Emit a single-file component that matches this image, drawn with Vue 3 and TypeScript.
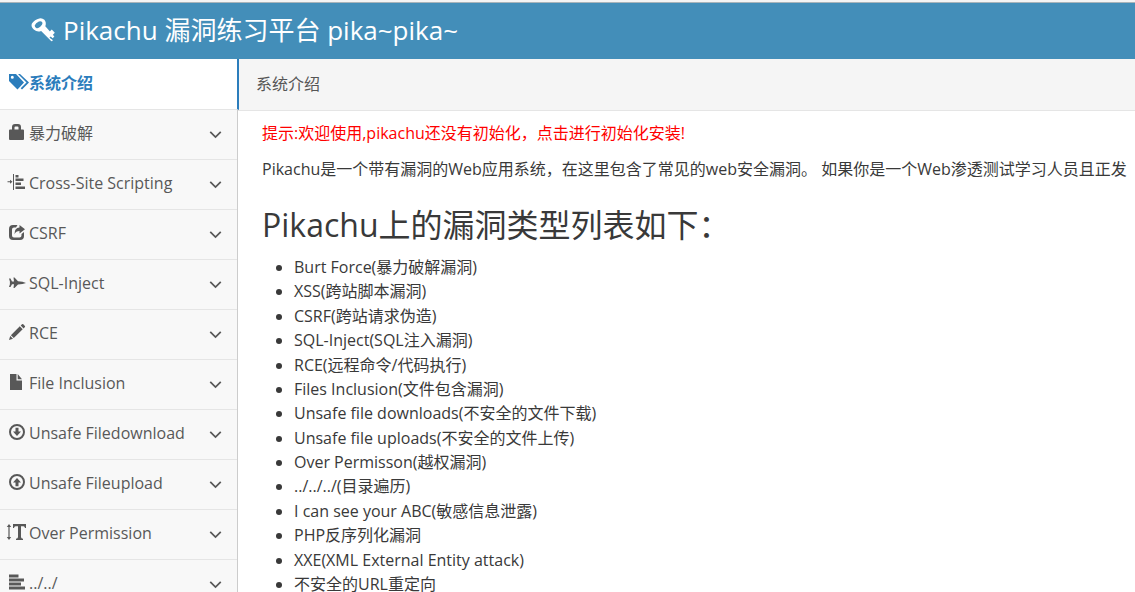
<script setup lang="ts">
interface NavItem {
  label: string
  icon: string
}

const navItems: NavItem[] = [
  { label: '暴力破解', icon: 'lock' },
  { label: 'Cross-Site Scripting', icon: 'indent' },
  { label: 'CSRF', icon: 'share' },
  { label: 'SQL-Inject', icon: 'plane' },
  { label: 'RCE', icon: 'pencil' },
  { label: 'File Inclusion', icon: 'file' },
  { label: 'Unsafe Filedownload', icon: 'download' },
  { label: 'Unsafe Fileupload', icon: 'upload' },
  { label: 'Over Permission', icon: 'height' },
  { label: '../../', icon: 'align' },
]

const icons: Record<string, string> = {
  lock: 'M0 6.500Q0 5.500 1 5.500H3V3Q3 0 6 0H9Q12 0 12 3V5.500H14Q15 5.500 15 6.500V15Q15 16 14 16H1Q0 16 0 15ZM5.500 5.500H9.500V3.500Q9.500 2.500 8.500 2.500H6.500Q5.500 2.500 5.500 3.500Z',
  indent: 'M4 0H5V16H4ZM-1.500 7.200H1V5.700L3.500 7.700 1 9.700V8.200H-1.500ZM6.500 1H9.500V3.500H6.500ZM6.500 4.500H14.500V7H6.500ZM6.500 8.500H12V11H6.500ZM6.500 12.500H16V15H6.500Z',
  share: 'M8.500 1 7 3.500H5Q3 3.500 3 5.500V11.500Q3 13.500 5 13.500H10.500Q12.500 13.500 12.500 11.500V10L15 8V12Q15 16 11 16H4Q0 16 0 12V5Q0 1 4 1ZM10.500 1 16 5.200 10.500 9.500V7Q7 7 5.500 10.200Q5.500 3.700 10.500 3.500Z',
  plane: 'M0 4.500H1.500L3 7.500H5L4.500 3.500H5.500L9 7.300Q14 7.500 17 9Q14 10.300 9 10.500L5.500 14H4.500L5 10.300H3L1.500 13H0L.9 10.300V7.500Z',
  pencil: 'M11.700 1.400 13 .2Q13.700-.3 14.300.3L15.900 1.900Q16.400 2.500 15.900 3.100L14.600 4.400ZM10.800 2.300 13.700 5.300 4.800 14.100 1.900 11.200ZM1.200 12 4 14.800 0 16Z',
  file: 'M1 0H7.500V6.500H13V16H1ZM8.700 0 13 5.300H8.700Z',
  download: 'M8 0A8 8 0 1 1 8 16A8 8 0 1 1 8 0ZM8 2A6 6 0 1 0 8 14A6 6 0 1 0 8 2ZM6.500 3.800H9.500V7.500H12L8 12 4 7.500H6.500Z',
  upload: 'M8 0A8 8 0 1 1 8 16A8 8 0 1 1 8 0ZM8 2A6 6 0 1 0 8 14A6 6 0 1 0 8 2ZM6.500 12.200H9.500V8.500H12L8 4 4 8.500H6.500Z',
  height: 'M0 0 2.200 3H.6V13H2.200L0 16-2.200 13H-.6V3H-2.200ZM4 0H17V4H16Q15.700 2.300 14.500 2.300H12V13Q12 14.700 14 14.700V16H7V14.700Q9 14.700 9 13V2.300H6.500Q5.300 2.300 5 4H4Z',
  align: 'M0 .500H9.500V3.500H0ZM0 4.500H15V7.500H0ZM0 8.500H12V11.500H0ZM0 12.500H16V15.500H0Z',
}

const vulnerabilities: string[] = [
  'Burt Force(暴力破解漏洞)',
  'XSS(跨站脚本漏洞)',
  'CSRF(跨站请求伪造)',
  'SQL-Inject(SQL注入漏洞)',
  'RCE(远程命令/代码执行)',
  'Files Inclusion(文件包含漏洞)',
  'Unsafe file downloads(不安全的文件下载)',
  'Unsafe file uploads(不安全的文件上传)',
  'Over Permisson(越权漏洞)',
  '../../../(目录遍历)',
  'I can see your ABC(敏感信息泄露)',
  'PHP反序列化漏洞',
  'XXE(XML External Entity attack)',
  '不安全的URL重定向',
]
</script>

<template>
  <div class="page">
    <header class="navbar">
      <a class="brand" href="#">
        <svg class="key" viewBox="0 0 26 26" aria-hidden="true">
          <path fill-rule="evenodd" d="M9 .5Q12-.3 14.500 2Q17 5 15.500 9L25.300 20 23.500 22 21.300 20 20 21.300 23.500 23.800Q23.500 25.500 21.800 25L11 14Q7 16 3 12.500Q-.5 9 1 6Q4 1.500 9 .5ZM8.500 3.800Q5 5.500 4 8Q4 10 6 11Q8 11.500 10 9.500Q12.500 7.500 12.500 5.500Q12 2.800 8.500 3.800Z" />
          <path d="M19.500 15.500 22.500 12.500 25.800 16 23 19Z" />
        </svg>
        <span>Pikachu 漏洞练习平台 pika~pika~</span>
      </a>
    </header>
    <div class="shell">
      <nav class="sidebar">
        <a class="item active" href="#">
          <svg class="tags" viewBox="0 0 20 16" aria-hidden="true">
            <path fill-rule="evenodd" d="M0 0H7L15 8.500 8.500 15.500 0 7ZM3.300 1.800A1.500 1.500 0 1 0 3.300 4.800A1.500 1.500 0 1 0 3.300 1.800Z" />
            <path d="M9 0H11L20 8.500 13 15.500 11.700 14.200 17.500 8.500Z" />
          </svg>
          <span class="label">系统介绍</span>
        </a>
        <a v-for="item in navItems" :key="item.label" class="item" href="#">
          <svg class="icon" viewBox="0 0 16 16" aria-hidden="true">
            <path fill-rule="evenodd" :d="icons[item.icon]" />
          </svg>
          <span class="label">{{ item.label }}</span>
          <svg class="chevron" viewBox="0 0 14 8" aria-hidden="true"><path d="M1 1 7 7 13 1" /></svg>
        </a>
      </nav>
      <main class="main">
        <div class="breadcrumb">系统介绍</div>
        <section class="content">
          <p><a class="notice" href="#">提示:欢迎使用,pikachu还没有初始化，点击进行初始化安装!</a></p>
          <p>Pikachu是一个带有漏洞的Web应用系统，在这里包含了常见的web安全漏洞。 如果你是一个Web渗透测试学习人员且正发</p>
          <h1>Pikachu上的漏洞类型列表如下：</h1>
          <ul>
            <li v-for="entry in vulnerabilities" :key="entry">{{ entry }}</li>
          </ul>
        </section>
      </main>
    </div>
  </div>
</template>

<style>
body {
  margin: 0;
}
</style>

<style scoped>
.page {
  box-sizing: border-box;
  display: flex;
  flex-direction: column;
  height: 100vh;
  overflow: hidden;
  border-top: 2px solid #f4f4f4;
  background: #fff;
  color: #393939;
  font-family: "Open Sans", "Noto Sans CJK SC", sans-serif;
  font-size: 16px;
  line-height: 24px;
}
a {
  color: inherit;
  text-decoration: none;
}
.navbar {
  box-sizing: border-box;
  flex: none;
  display: flex;
  align-items: center;
  height: 57px;
  padding: 0 0 2px 31px;
  border-top: 1px solid #a9b4ba;
  background: #438eb9;
  color: #fff;
}
.brand {
  display: flex;
  align-items: center;
  gap: 8px;
  font-size: 26px;
  line-height: 36px;
  white-space: nowrap;
}
svg {
  flex: none;
  overflow: visible;
  fill: currentColor;
}
.key {
  width: 24px;
  height: 24px;
}
.shell {
  flex: 1;
  display: flex;
  min-height: 0;
}
.sidebar {
  flex: none;
  box-sizing: border-box;
  width: 238px;
  border-right: 1px solid #ccc;
  background: #f8f8f8;
}
.item {
  box-sizing: border-box;
  display: flex;
  align-items: center;
  height: 50px;
  padding: 0 15px 4px 9px;
  border-bottom: 1px solid #e5e5e5;
  color: #585858;
}
.item.active {
  position: relative;
  height: 51px;
  margin-right: -2px;
  padding-bottom: 2px;
  border-right: 2px solid #2b7dbc;
  background: #fff;
  color: #2b7dbc;
  font-weight: bold;
}
.icon {
  width: 16px;
  height: 16px;
  margin: 0 4px 2px 0;
}
.tags {
  width: 20px;
  height: 16px;
  margin-bottom: 2px;
}
.label {
  flex: 1;
  white-space: nowrap;
}
.chevron {
  width: 13px;
  height: 7px;
  margin-top: 3px;
  fill: none;
  stroke: #585858;
  stroke-width: 2;
}
.main {
  flex: 1;
  display: flex;
  flex-direction: column;
  min-width: 0;
}
.breadcrumb {
  flex: none;
  padding: 13px 18px 14px;
  border-bottom: 1px solid #e5e5e5;
  background: #f5f5f5;
  color: #555;
}
.content {
  flex: 1;
  display: flex;
  flex-direction: column;
  min-height: 0;
  padding: 10px 0 0 24px;
}
p {
  margin: 0 0 12px;
  overflow: hidden;
  white-space: nowrap;
}
.notice {
  color: #f00;
}
h1 {
  margin: 12px 0 14px;
  font-size: 32px;
  font-weight: normal;
  line-height: 40px;
}
/* Rows share out the remaining height evenly */
ul {
  flex: 1;
  display: flex;
  flex-direction: column;
  justify-content: space-between;
  gap: 8px;
  max-height: 360px;
  margin: 0;
  padding-left: 32px;
}
li {
  line-height: 16px;
}
</style>
